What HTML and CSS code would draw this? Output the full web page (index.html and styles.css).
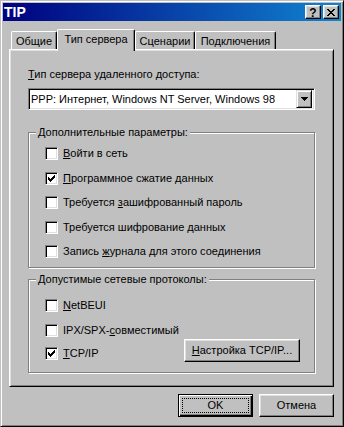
FILE: index.html
```html
<!DOCTYPE html>
<html lang="ru">
<head>
<meta charset="utf-8">
<title>TIP</title>
<link rel="stylesheet" href="styles.css">
</head>
<body>
<div class="window">
  <div class="titlebar">
    <span class="title">TIP</span>
    <div class="tbtns">
      <span class="tbtn help">?</span>
      <span class="tbtn close"><svg width="8" height="7" viewBox="0 0 8 7" shape-rendering="crispEdges"><path d="M0 0h2v1H0zM6 0h2v1H6zM1 1h2v1H1zM5 1h2v1H5zM2 2h4v1H2zM3 3h2v1H3zM2 4h4v1H2zM1 5h2v1H1zM5 5h2v1H5zM0 6h2v1H0zM6 6h2v1H6z"/></svg></span>
    </div>
  </div>

  <div class="tabs">
    <div class="tab t1">Общие</div>
    <div class="tab sel">Тип сервера</div>
    <div class="tab t3">Сценарии</div>
    <div class="tab t4">Подключения</div>
  </div>

  <div class="panel">
    <div class="lbl"><u>Т</u>ип сервера удаленного доступа:</div>
    <div class="combo">
      <span class="ctext">PPP: Интернет, Windows NT Server, Windows 98</span>
      <span class="dd"><svg width="7" height="4" viewBox="0 0 7 4" shape-rendering="crispEdges"><path d="M0 0h7v1H0zM1 1h5v1H1zM2 2h3v1H2zM3 3h1v1H3z"/></svg></span>
    </div>

    <fieldset class="group g1">
      <legend>Дополнительные параметры:</legend>
      <div class="rows">
        <div class="row"><span class="cb"></span><span><u>В</u>ойти в сеть</span></div>
        <div class="row"><span class="cb"><svg class="chk" width="7" height="7" viewBox="0 0 7 7" shape-rendering="crispEdges"><path d="M6 0h1v1H6zM5 1h2v1H5zM0 2h1v1H0zM4 2h3v1H4zM0 3h2v1H0zM3 3h3v1H3zM0 4h5v1H0zM1 5h3v1H1zM2 6h1v1H2z"/></svg></span><span><u>П</u>рограммное сжатие данных</span></div>
        <div class="row"><span class="cb"></span><span>Требуется <u>з</u>ашифрованный пароль</span></div>
        <div class="row"><span class="cb"></span><span>Требуется шифрование <u>д</u>анных</span></div>
        <div class="row"><span class="cb"></span><span>Запись <u>ж</u>урнала для этого соединения</span></div>
      </div>
    </fieldset>

    <fieldset class="group g2">
      <legend>Допустимые сетевые протоколы:</legend>
      <div class="rows">
        <div class="row r1"><span class="cb"></span><span><u>N</u>etBEUI</span></div>
        <div class="row r2"><span class="cb"></span><span>IPX/SPX-<u>с</u>овместимый</span></div>
        <div class="row3">
          <div class="row"><span class="cb"><svg class="chk" width="7" height="7" viewBox="0 0 7 7" shape-rendering="crispEdges"><path d="M6 0h1v1H6zM5 1h2v1H5zM0 2h1v1H0zM4 2h3v1H4zM0 3h2v1H0zM3 3h3v1H3zM0 4h5v1H0zM1 5h3v1H1zM2 6h1v1H2z"/></svg></span><span><u>T</u>CP/IP</span></div>
          <button class="btn setup"><u>Н</u>астройка TCP/IP...</button>
        </div>
      </div>
    </fieldset>
  </div>

  <div class="buttons">
    <button class="btn def"><span class="focus">OK</span></button>
    <button class="btn">Отмена</button>
  </div>
</div>
</body>
</html>
```

FILE: styles.css
```css
* { box-sizing: border-box; }

html, body {
  margin: 0;
  padding: 0;
  background: #c0c0c0;
}

body {
  font-family: "Liberation Sans", Arial, sans-serif;
  font-size: 11px;
  line-height: 13px;
  color: #000;
}

u { text-decoration: underline; text-underline-offset: 1px; }

.window {
  width: 344px;
  height: 427px;
  background: #c0c0c0;
  border: 1px solid;
  border-color: #c0c0c0 #000 #000 #c0c0c0;
  box-shadow: inset 1px 1px #fff, inset -1px -1px #808080;
  padding: 2px;
  display: flex;
  flex-direction: column;
}

/* title bar */
.titlebar {
  height: 18px;
  flex: none;
  background: linear-gradient(to right, #000080, #1084d0);
  display: flex;
  align-items: center;
  justify-content: space-between;
  padding: 0 2px 0 1px;
}

.title {
  color: #fff;
  font-weight: bold;
  font-size: 14px;
  line-height: 16px;
}

.tbtns {
  display: flex;
  gap: 2px;
}

.tbtn {
  width: 16px;
  height: 14px;
  background: #c0c0c0;
  border: 1px solid;
  border-color: #fff #000 #000 #fff;
  box-shadow: inset -1px -1px #808080, inset 1px 1px #dfdfdf;
  display: flex;
  align-items: center;
  justify-content: center;
}

.help {
  font-weight: bold;
  font-size: 12px;
  line-height: 12px;
  padding-top: 1px;
}

.close svg { display: block; margin-top: 0; }

/* tabs */
.tabs {
  flex: none;
  height: 20px;
  margin-top: 8px;
  padding-left: 8px;
  display: flex;
  align-items: flex-end;
}

.tab {
  height: 18px;
  background: #c0c0c0;
  border-top: 1px solid #fff;
  border-left: 1px solid #fff;
  border-right: 1px solid #000;
  box-shadow: inset -1px 0 #808080;
  border-radius: 2px 2px 0 0;
  display: flex;
  justify-content: center;
  align-items: center;
  padding-top: 1px;
  white-space: nowrap;
}

.t1 { width: 46px; }
.t3 { width: 60px; }
.t4 { width: 81px; }

.tab.sel {
  width: 78px;
  height: 22px;
  margin-bottom: -2px;
  position: relative;
  z-index: 1;
  align-items: flex-start;
  padding-top: 3px;
}

/* panel */
.panel {
  flex: none;
  height: 338px;
  margin: 0 7px 0 6px;
  border: 1px solid;
  border-color: #fff #000 #000 #fff;
  box-shadow: inset 1px 1px #dfdfdf, inset -1px -1px #808080;
  padding: 18px 0 0 18px;
  display: flex;
  flex-direction: column;
}

.lbl { height: 13px; }

.combo {
  width: 287px;
  height: 22px;
  margin-top: 7px;
  background: #fff;
  border: 1px solid;
  border-color: #808080 #fff #fff #808080;
  box-shadow: inset 1px 1px #000, inset -1px -1px #dfdfdf;
  padding: 2px;
  display: flex;
  align-items: center;
}

.ctext { white-space: nowrap; }

.dd {
  margin-left: auto;
  width: 16px;
  height: 18px;
  background: #c0c0c0;
  border: 1px solid;
  border-color: #dfdfdf #000 #000 #dfdfdf;
  box-shadow: inset 1px 1px #fff, inset -1px -1px #808080;
  display: flex;
  align-items: center;
  justify-content: center;
}

.dd svg { display: block; }

/* group boxes */
.group {
  width: 287px;
  min-width: 0;
  margin: 16px 0 0 0;
  padding: 0 0 9px 7px;
  border: 1px solid #808080;
  box-shadow: 1px 1px 0 #fff, inset 1px 1px 0 #fff;
}

.group legend {
  padding: 0 2px;
  margin: 0;
  line-height: 13px;
  background: #c0c0c0;
}

.g2 {
  margin-top: 5px;
  padding-bottom: 10px;
}

.rows {
  display: flex;
  flex-direction: column;
  gap: 11.5px;
  padding-top: 8px;
  margin-left: 9px;
}

.g2 .rows {
  gap: 0;
  padding-top: 0;
}

.row {
  height: 13px;
  display: flex;
  align-items: center;
  gap: 5px;
  white-space: nowrap;
}

.g2 .r1 { margin-top: 13px; }
.g2 .r2 { margin-top: 12px; }

.row3 {
  margin-top: 2px;
  height: 23px;
  display: flex;
  align-items: flex-start;
  justify-content: space-between;
}

.row3 .row { margin-top: 8px; }

.cb {
  flex: none;
  width: 13px;
  height: 13px;
  background: #fff;
  border: 1px solid;
  border-color: #808080 #fff #fff #808080;
  box-shadow: inset 1px 1px #000, inset -1px -1px #dfdfdf;
  padding: 2px 0 0 2px;
}

.chk { display: block; }

/* buttons */
.btn {
  width: 75px;
  height: 23px;
  font: inherit;
  color: #000;
  background: #c0c0c0;
  border: 1px solid;
  border-color: #fff #000 #000 #fff;
  box-shadow: inset -1px -1px #808080, inset 1px 1px #dfdfdf;
  padding: 0;
  margin: 0;
  display: flex;
  align-items: center;
  justify-content: center;
  white-space: nowrap;
}

.btn.setup {
  width: 116px;
  margin-right: 14px;
}

.btn.def {
  border-color: #000;
  box-shadow: inset 1px 1px #fff, inset -1px -1px #000, inset -2px -2px #808080;
  padding: 3px 3px 3px 3px;
}

.focus {
  flex: 1;
  align-self: stretch;
  border: 1px dotted #000;
  display: flex;
  align-items: center;
  justify-content: center;
}

.buttons {
  flex: none;
  margin: 7px 7px 0 0;
  display: flex;
  justify-content: flex-end;
  gap: 6px;
}
```
